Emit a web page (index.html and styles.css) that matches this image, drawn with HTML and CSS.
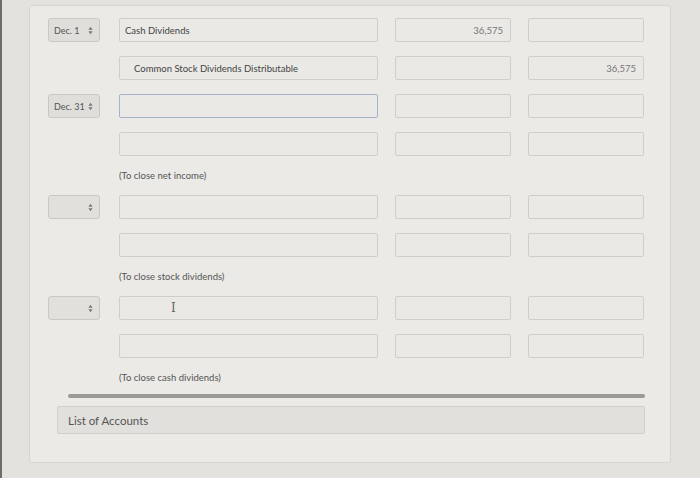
FILE: index.html
```html
<!DOCTYPE html>
<html>
<head>
<meta charset="utf-8">
<link rel="stylesheet" href="styles.css">
</head>
<body>
<div class="screen">
  <div class="panel">
    <div class="journal">
      <div class="sel"><span>Dec. 1</span><svg class="arr" viewBox="0 0 6 10"><path d="M3 0.5 L5.5 4 L0.5 4 Z M3 9.5 L5.5 6 L0.5 6 Z"/></svg></div>
      <div class="inp acct">Cash Dividends</div>
      <div class="inp num">36,575</div>
      <div class="inp num"></div>

      <div class="spacer"></div>
      <div class="inp acct indent">Common Stock Dividends Distributable</div>
      <div class="inp num"></div>
      <div class="inp num">36,575</div>

      <div class="sel"><span>Dec. 31</span><svg class="arr" viewBox="0 0 6 10"><path d="M3 0.5 L5.5 4 L0.5 4 Z M3 9.5 L5.5 6 L0.5 6 Z"/></svg></div>
      <div class="inp acct focus"></div>
      <div class="inp num"></div>
      <div class="inp num"></div>

      <div class="spacer"></div>
      <div class="inp acct"></div>
      <div class="inp num"></div>
      <div class="inp num"></div>

      <div class="note">(To close net income)</div>

      <div class="sel blank"><span></span><svg class="arr" viewBox="0 0 6 10"><path d="M3 0.5 L5.5 4 L0.5 4 Z M3 9.5 L5.5 6 L0.5 6 Z"/></svg></div>
      <div class="inp acct"></div>
      <div class="inp num"></div>
      <div class="inp num"></div>

      <div class="spacer"></div>
      <div class="inp acct"></div>
      <div class="inp num"></div>
      <div class="inp num"></div>

      <div class="note">(To close stock dividends)</div>

      <div class="sel blank"><span></span><svg class="arr" viewBox="0 0 6 10"><path d="M3 0.5 L5.5 4 L0.5 4 Z M3 9.5 L5.5 6 L0.5 6 Z"/></svg></div>
      <div class="inp acct cursor-cell"><span class="ibeam">I</span></div>
      <div class="inp num"></div>
      <div class="inp num"></div>

      <div class="spacer"></div>
      <div class="inp acct"></div>
      <div class="inp num"></div>
      <div class="inp num"></div>

      <div class="note">(To close cash dividends)</div>
    </div>
    <div class="divider"></div>
    <div class="accounts">List of Accounts</div>
  </div>
</div>
</body>
</html>
```
FILE: styles.css
```css
html, body {
  margin: 0;
  padding: 0;
}
body {
  width: 700px;
  height: 478px;
  overflow: hidden;
  background: #e3e2de;
  font-family: Lato, "Open Sans", sans-serif;
}
.screen {
  height: 478px;
  border-left: 2px solid #6f6d69;
  box-sizing: border-box;
  padding: 5px 0 0 27px;
}
.panel {
  width: 642px;
  height: 458px;
  box-sizing: border-box;
  background: #ebeae6;
  border: 1px solid #d6d5d1;
  border-radius: 3px;
  padding: 12px 0 0 18px;
}
.journal {
  display: grid;
  grid-template-columns: 54px 259px 116px 116px;
  column-gap: 17px;
  row-gap: 14px;
}
.sel {
  height: 24px;
  margin-right: 2px;
  display: flex;
  align-items: center;
  justify-content: space-between;
  box-sizing: border-box;
  background: #dfdeda;
  border: 1px solid #c9c8c4;
  border-radius: 3px;
  padding: 0 6px 0 5px;
  font-size: 9px;
  color: #555;
}
.sel.blank { background: #e1e0dc; }
.arr {
  width: 5px;
  height: 9px;
  fill: #777;
  flex: none;
}
.inp {
  height: 24px;
  box-sizing: border-box;
  background: #eae9e5;
  border: 1px solid #cfcecb;
  border-radius: 2px;
  display: flex;
  align-items: center;
  font-size: 9.5px;
  color: #444;
}
.acct { padding-left: 5px; }
.acct.indent { padding-left: 14px; }
.num {
  justify-content: flex-end;
  padding-right: 7px;
  color: #777;
}
.focus {
  border: 1.5px solid #a4b3c9;
}
.note {
  grid-column: 2 / 5;
  height: 11px;
  line-height: 11px;
  font-size: 9.5px;
  color: #555;
}
.cursor-cell { padding-left: 51px; }
.ibeam {
  font-family: "DejaVu Serif", serif;
  font-size: 12px;
  color: #666;
}
.divider {
  margin: 11px 25px 0 20px;
  height: 4px;
  border-radius: 2px;
  background: #9b9a97;
}
.accounts {
  margin: 8px 25px 0 9px;
  height: 28px;
  box-sizing: border-box;
  background: #e1e0dc;
  border: 1px solid #d0cfcb;
  border-radius: 2px;
  padding-left: 10px;
  display: flex;
  align-items: center;
  font-size: 11.5px;
  color: #555;
}
```
